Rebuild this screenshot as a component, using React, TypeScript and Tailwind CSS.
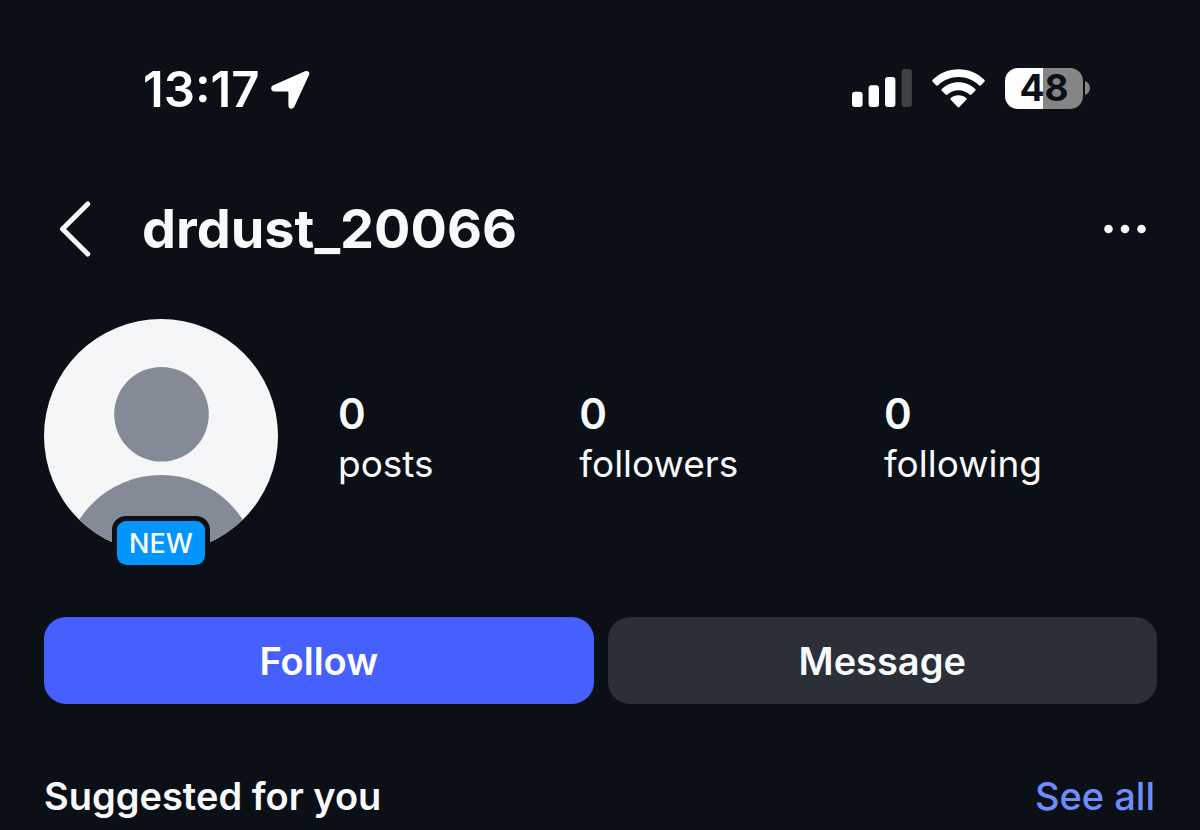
import React from 'react';

const stats = [
  { label: 'posts', value: 0 },
  { label: 'followers', value: 0 },
  { label: 'following', value: 0 },
];

function StatusBar() {
  return (
    <div className="flex h-[48px] items-center justify-between pl-[99px] pr-[67px] text-white">
      <div className="flex items-center gap-3 pt-[3px]">
        <span className="text-[49px] leading-[50px] font-semibold">13:17</span>
        <svg width="39" height="40" viewBox="0 0 39 40" fill="currentColor" aria-hidden="true">
          <path d="M34 1.3C37 0 39.2 2 38 5L23.4 36.5C22 39.8 17.4 39.2 17.4 35.4V22.4C17.4 21.8 17 21.4 16.4 21.4H3.4C-.4 21.4-1 16.7 2.4 15.3Z" />
        </svg>
      </div>

      <div className="flex items-center gap-5">
        <svg width="60" height="39" viewBox="0 0 60 39" fill="currentColor" aria-hidden="true">
          <rect x="0" y="22.8" width="10.6" height="15.2" rx="3" />
          <rect x="16.6" y="16.3" width="10.4" height="21.7" rx="3" />
          <rect x="33" y="8.1" width="10.4" height="29.9" rx="3" />
          <rect x="49.5" y="0.1" width="10.4" height="37.9" rx="3" fill="#3e4044" />
        </svg>
        <svg width="53" height="39" viewBox="0 0 53 39" fill="currentColor" aria-hidden="true">
          <path d="M26.5.2C36.5.2 45.6 4.1 52.3 10.8C52.9 11.4 52.9 12.1 52.3 12.7L48.9 16.2C48.3 16.8 47.5 16.8 46.9 16.2C41.4 11 34.3 8 26.5 8S11.6 11 6.1 16.2C5.5 16.8 4.7 16.8 4.1 16.2L.7 12.7C.1 12.1.1 11.4.7 10.8C7.4 4.1 16.5.2 26.5.2Z" />
          <path d="M26.5 13.2C33 13.2 38.8 15.7 43.2 19.9C43.8 20.5 43.8 21.2 43.2 21.8L39.5 25.5C38.9 26.1 38.2 26.1 37.6 25.5C34.6 22.8 30.8 21.2 26.5 21.2S18.4 22.8 15.4 25.5C14.8 26.1 14.1 26.1 13.5 25.5L9.8 21.8C9.2 21.2 9.2 20.5 9.8 19.9C14.2 15.7 20 13.2 26.5 13.2Z" />
          <path d="M26.5 26.3C29.4 26.3 32.1 27.3 34.1 28.9C34.8 29.5 34.8 30.2 34.2 30.8L27.6 37.8C26.9 38.6 26.1 38.6 25.4 37.8L18.8 30.8C18.2 30.2 18.2 29.5 18.9 28.9C20.9 27.3 23.6 26.3 26.5 26.3Z" />
        </svg>
        <div className="flex items-center gap-0.5">
          <div className="flex h-[41px] w-[78px] items-center justify-center rounded-[13px] bg-linear-to-r from-white from-49% to-[#858585] to-49% text-[37px] leading-[40px] font-bold text-[#0b1016]">
            48
          </div>
          <svg width="5" height="14" viewBox="0 0 5 14" fill="#858585" aria-hidden="true">
            <path d="M0 0C3 1 5 3.700 5 7S3 13 0 14Z" />
          </svg>
        </div>
      </div>
    </div>
  );
}

function ProfileHeader() {
  return (
    <header className="mt-[82px] flex h-[70px] items-center justify-between pl-[15px] pr-[11px]">
      <div className="flex items-center gap-[51px]">
        <button type="button" aria-label="Back">
          <svg width="32" height="56" viewBox="0 0 32 56" fill="none" stroke="currentColor" strokeWidth="5" strokeLinecap="round" strokeLinejoin="round" aria-hidden="true">
            <path d="M28.700 3L3.500 28L28.700 53" />
          </svg>
        </button>
        <h1 className="text-[54px] leading-[70px] font-bold">drdust_20066</h1>
      </div>
      <button type="button" aria-label="More options">
        <svg width="42" height="10" viewBox="0 0 42 10" fill="currentColor" aria-hidden="true">
          <circle cx="4.500" cy="5" r="4.300" />
          <circle cx="21" cy="5" r="4.300" />
          <circle cx="37.500" cy="5" r="4.300" />
        </svg>
      </button>
    </header>
  );
}

function Avatar() {
  return (
    <div className="relative shrink-0">
      <svg className="rounded-full" width="234" height="234" viewBox="0 0 234 234" role="img" aria-label="Profile picture">
        <rect width="234" height="234" fill="#f4f6f8" />
        <circle cx="117.500" cy="95.300" r="47.300" fill="#858b96" />
        <circle cx="117" cy="253" r="97" fill="#858b96" />
      </svg>
      <span className="absolute -bottom-[17px] left-1/2 flex h-[54px] w-[98px] -translate-x-1/2 items-center justify-center rounded-[14px] border-5 border-[#0b1016] bg-[#0095ff] bg-clip-padding pt-[2px] text-[27px] leading-[32px] font-medium text-white">
        NEW
      </span>
    </div>
  );
}

export default function App() {
  return (
    <div className="min-h-screen bg-[#0b1016] pt-[64px] pr-[43px] pl-[44px] font-['Inter',sans-serif] text-[#f7f9fb]">
      <StatusBar />
      <main>
        <ProfileHeader />

        <section className="mt-[55px] flex items-start gap-[60px]">
          <Avatar />
          <dl className="mt-[70px] flex flex-1 justify-between pr-[115px]">
            {stats.map((stat) => (
              <div key={stat.label} className="flex flex-col-reverse">
                <dt className="text-[37px] leading-[50px]">{stat.label}</dt>
                <dd className="text-[42px] leading-[50px] font-semibold">{stat.value}</dd>
              </div>
            ))}
          </dl>
        </section>

        <div className="mt-[64px] grid grid-cols-2 gap-[14px]">
          <button type="button" className="h-[87px] rounded-[22px] bg-[#465fff] text-[38px] leading-[44px] font-semibold text-white">
            Follow
          </button>
          <button type="button" className="h-[87px] rounded-[22px] bg-[#2b2f37] text-[38px] leading-[44px] font-semibold">
            Message
          </button>
        </div>

        <section className="mt-[70px] flex items-center justify-between pr-[2px]">
          <h2 className="text-[38px] leading-[44px] font-semibold">Suggested for you</h2>
          <a href="#suggested" className="text-[38px] leading-[44px] font-medium text-[#6f8cff]">
            See all
          </a>
        </section>
      </main>
    </div>
  );
}
